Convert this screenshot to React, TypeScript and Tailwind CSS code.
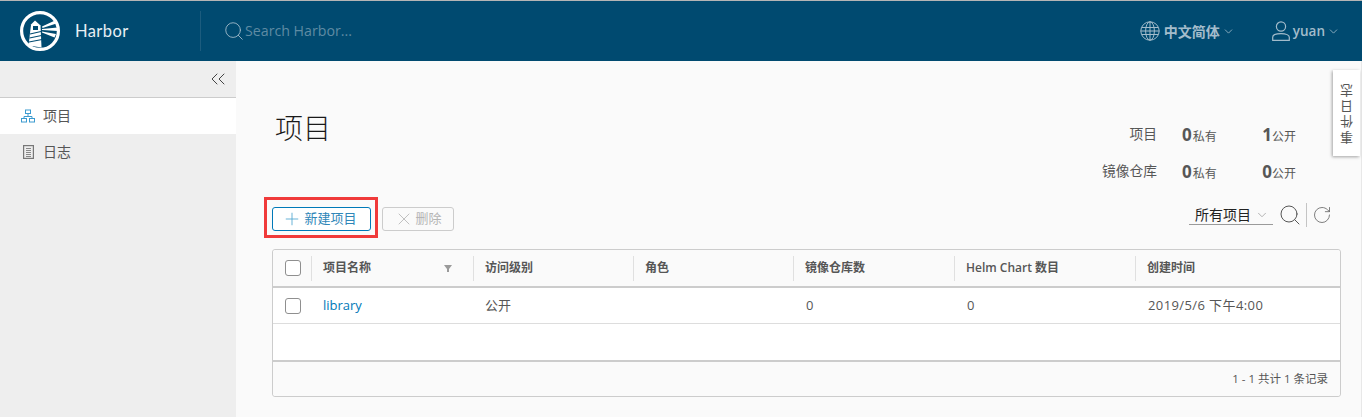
import { ChevronDown, ChevronsLeft, Plus, RotateCw, Search, X } from "lucide-react";

const font = "font-['Open_Sans','Noto_Sans_CJK_SC',sans-serif]";

function Logo() {
  return (
    <svg className="w-10 h-10" viewBox="0 0 40 40" fill="none">
      <circle cx="20" cy="20" r="18.4" stroke="#fff" strokeWidth="3.2" />
      <path d="M15 9.5l5 4.5H10.5z" fill="#fff" />
      <path d="M11 14h9.5l1 22.5-13-2z" fill="#fff" />
      <rect x="13" y="15" width="5" height="4" fill="#004a70" />
      <path d="M10 23l11-2.5M9.5 27l12-2.5M9 31l13-2.5" stroke="#004a70" strokeWidth="1.1" />
      <path d="M22 15.5l13-6 1.5 3-14 4.5zM22 18l15.5-1.5v3.5L22 19zM22 20.5l14 2.5-1.5 3.5-12.5-5z" fill="#fff" />
    </svg>
  );
}

function Globe() {
  return (
    <svg className="w-5 h-5" viewBox="0 0 20 20" fill="none" stroke="#a3bccb" strokeWidth="1">
      <circle cx="10" cy="10" r="9.2" />
      <ellipse cx="10" cy="10" rx="4.4" ry="9.2" />
      <path d="M10 .8v18.4M1.7 6.5h16.6M1.7 13.5h16.6M.8 10h18.4" />
    </svg>
  );
}

function UserIcon() {
  return (
    <svg className="w-[18px] h-[20px]" viewBox="0 0 18 20" fill="none" stroke="#a3bccb" strokeWidth="1.2">
      <circle cx="9" cy="5.5" r="4.6" />
      <path d="M.7 19.3v-3c0-2 3-3.6 8.3-3.6s8.3 1.6 8.3 3.6v3z" />
    </svg>
  );
}

function ProjectIcon() {
  return (
    <svg className="w-[14px] h-[14px]" viewBox="0 0 14 14" fill="none" stroke="#3d9bd0" strokeWidth="1">
      <rect x="4.5" y="1" width="5" height="3.5" />
      <rect x=".5" y="9.5" width="5" height="3.5" />
      <rect x="8.5" y="9.5" width="5" height="3.5" />
      <path d="M7 4.5v3M3 9.5v-2h8v2" />
    </svg>
  );
}

function LogIcon() {
  return (
    <svg className="w-[11px] h-[14px]" viewBox="0 0 11 14" fill="none" stroke="#777" strokeWidth="1">
      <rect x=".6" y=".6" width="9.8" height="12.8" strokeWidth="1.2" />
      <path d="M3 3.5h5M3 5.5h5M3 7.5h5M3 9.5h5M3 11.5h5" stroke="#888" />
    </svg>
  );
}

function Checkbox() {
  return <span className="block w-4 h-4 rounded-[3px] border border-[#8f8f8f] bg-white" />;
}

function Stat({ label, first, second }: { label: string; first: number; second: number }) {
  return (
    <div className="flex items-center h-[37px] text-[#565656] text-[13.75px]">
      <span className="w-[80px] text-right">{label}</span>
      <span className="ml-[25px] w-[40px] text-[12px]">
        <b className="text-[17px] font-bold mr-[1px]">{first}</b>私有
      </span>
      <span className="w-[74px] text-right text-[12px]">
        <b className="text-[17px] font-bold">{second}</b>公开
      </span>
    </div>
  );
}

const columns = [
  { title: "项目名称", width: "w-[162px]", value: "library", pad: "pl-[12px] text-[#0079b8]" },
  { title: "访问级别", width: "w-[160px]", value: "公开", pad: "pl-[12px]" },
  { title: "角色", width: "w-[160px]", value: "", pad: "pl-[13px]" },
  { title: "镜像仓库数", width: "w-[161px]", value: "0", pad: "pl-[13px]" },
  { title: "Helm Chart 数目", width: "w-[181px]", value: "0", pad: "pl-[13px]" },
  { title: "创建时间", width: "flex-1", value: "2019/5/6 下午4:00", pad: "pl-[13px] tracking-[0.4px]" },
];

export default function App() {
  return (
    <div className={`${font} w-[1362px] h-[417px] overflow-hidden flex flex-col bg-[#fafafa] relative`}>
      <header className="h-[61px] shrink-0 bg-[#004a70] border-t border-[#b5b5b5] flex items-center text-white">
        <div className="ml-[20px]"><Logo /></div>
        <span className="ml-[15px] text-[16.5px] w-[61px] font-['Lato'] tracking-[0.4px] text-[#e8f0f4]">Harbor</span>
        <div className="ml-[64px] w-px h-[40px] bg-[#1c5c7e]" />
        <Search className="ml-[22px] w-[22px] h-[22px] text-[#9fb9c8]" strokeWidth={1} />
        <span className="text-[14.2px] text-[#5f8ba3]">Search Harbor...</span>
        <div className="ml-auto flex items-center text-[#a3bccb] font-semibold text-[14px] mr-[22px]">
          <Globe />
          <span className="ml-[4px]">中文简体</span>
          <ChevronDown className="ml-[2px] w-[13px] h-[13px]" strokeWidth={1.5} />
          <span className="ml-[37px]"><UserIcon /></span>
          <span className="ml-[3px] text-[13.5px]">yuan</span>
          <ChevronDown className="ml-[2px] w-[13px] h-[13px]" strokeWidth={1.5} />
        </div>
      </header>

      <div className="flex flex-1 min-h-0">
        <aside className="w-[236px] shrink-0 bg-[#eeeeee] text-[#565656] text-[14px]">
          <div className="h-[37px] border-b border-[#cccccc] flex items-center justify-end pr-[6px]">
            <ChevronsLeft className="w-[24px] h-[24px] text-[#444]" strokeWidth={1} />
          </div>
          <div className="h-[36px] bg-white flex items-center pl-[21px] gap-[8px]">
            <ProjectIcon />
            <span className="pb-[2px]">项目</span>
          </div>
          <div className="h-[36px] flex items-center pl-[23px] gap-[9px]">
            <LogIcon />
            <span className="pb-[2px]">日志</span>
          </div>
        </aside>

        <main className="flex-1 flex flex-col pl-[36px] pr-[20px] border-r border-[#e8e8e8]">
          <div className="flex justify-between pt-[55px] h-[136px]">
            <h1 className="ml-[3px] text-[28px] leading-[24px] font-light text-[#1a1a1a]">项目</h1>
            <div className="mr-[45px]">
              <Stat label="项目" first={0} second={1} />
              <Stat label="镜像仓库" first={0} second={0} />
            </div>
          </div>

          <div className="flex items-start h-[41px]">
            <div className="-ml-[8px] w-[114px] h-[41px] border-[3px] border-[#f03a3a] flex items-start pl-[5px]">
              <button className="mt-[7px] w-[99px] h-[24px] pr-[4px] rounded-[3px] border border-[#0079b8] bg-white flex items-center justify-center gap-[2px] text-[13px] text-[#2f86b8]">
                <Plus className="w-[20px] h-[20px] text-[#4ba3cf]" strokeWidth={1} />
                新建项目
              </button>
            </div>
            <button className="mt-[10px] ml-[4px] w-[72px] h-[24px] rounded-[3px] border border-[#cccccc] flex items-center justify-center gap-[1px] text-[13px] text-[#b5b5b5]">
              <X className="w-[20px] h-[20px]" strokeWidth={1} />
              删除
            </button>
            <div className="ml-auto mt-[6px] h-[24px] flex items-center">
              <div className="w-[84px] h-[20px] border-b border-[#9a9a9a] flex items-center justify-between pl-[6px] pr-[4px] text-[14px] text-[#222]">
                所有项目
                <ChevronDown className="w-[14px] h-[14px] text-[#999]" strokeWidth={1.25} />
              </div>
              <Search className="ml-[5px] w-[24px] h-[24px] text-[#555]" strokeWidth={1} />
              <div className="ml-[4px] w-px h-[24px] bg-[#c4c4c4]" />
              <RotateCw className="ml-[5px] w-[20px] h-[20px] text-[#666]" strokeWidth={1} />
              <span className="w-[9px]" />
            </div>
          </div>

          <div className="mt-[11px] h-[148px] w-[1069px] rounded-[3px] border border-[#cccccc] bg-white flex flex-col text-[12px] text-[#565656]">
            <div className="h-[38px] shrink-0 bg-[#fafafa] border-b-[2px] border-[#cccccc] flex items-center rounded-t-[3px]">
              <div className="w-[38px] shrink-0 pl-[12px]"><Checkbox /></div>
              {columns.map((col) => (
                <div key={col.title} className={`${col.width} h-[25px] border-l border-[#e0e0e0] pl-[11px] pr-[20px] flex items-center justify-between font-semibold`}>
                  {col.title}
                  {col.title === "项目名称" && (
                    <svg className="w-[10px] h-[10px]" viewBox="0 0 10 10">
                      <path d="M1 2h8L6 6v3H4V6z" fill="#9a9a9a" />
                    </svg>
                  )}
                </div>
              ))}
            </div>
            <div className="h-[36px] shrink-0 border-b border-[#dddddd] flex items-center">
              <div className="w-[38px] shrink-0 pl-[12px]"><Checkbox /></div>
              {columns.map((col) => (
                <div key={col.title} className={`${col.width} ${col.pad} text-[13px]`}>
                  {col.value}
                </div>
              ))}
            </div>
            <div className="flex-1" />
            <div className="h-[36px] shrink-0 bg-[#fafafa] border-t-[2px] border-[#cccccc] flex items-center justify-end pr-[12px] rounded-b-[3px] text-[11.5px]">
              1 - 1 共计 1 条记录
            </div>
          </div>
        </main>
      </div>

      <div className="absolute left-[1333px] top-[70px] w-[27px] h-[86px] bg-white shadow-[-1px_1px_3px_rgba(0,0,0,0.35)] flex items-start justify-center pt-[12px] pl-[3px]">
        <span className="[writing-mode:vertical-rl] rotate-180 text-[13px] tracking-[2.6px] text-[#565656]">事件日志</span>
      </div>
    </div>
  );
}
